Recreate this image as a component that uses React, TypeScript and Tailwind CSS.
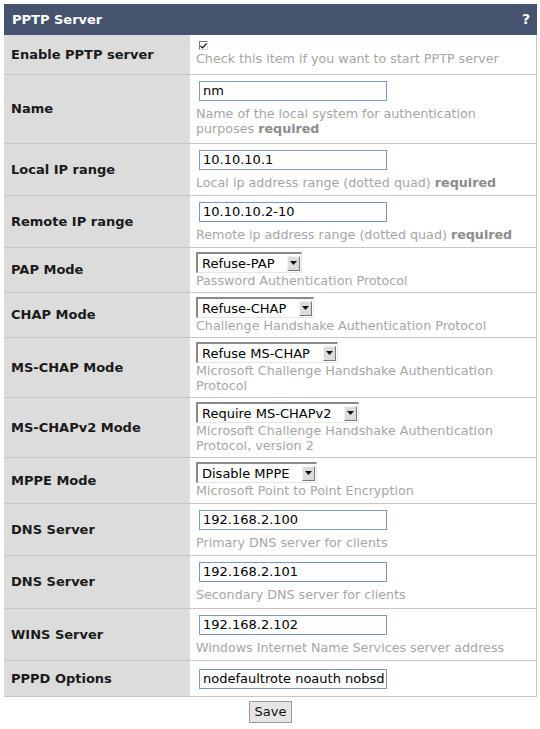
import React from "react";

const font = { fontFamily: "'DejaVu Sans', Verdana, sans-serif" };

function Hint({ children }: { children: React.ReactNode }) {
  return <div className="text-[12.7px] leading-[15px] text-[#a6a6a6]">{children}</div>;
}

function Req() {
  return <b className="font-bold text-[#8c8c8c]">required</b>;
}

function TextInput({ value }: { value: string }) {
  return (
    <div className="ml-[3px] flex h-[20px] w-[188px] items-center overflow-hidden border border-[#7d9ac6] bg-white pl-[3px] text-[13px] text-black">
      <span className="whitespace-nowrap">{value}</span>
    </div>
  );
}

function Select({ value }: { value: string }) {
  return (
    <div className="flex h-[21px] w-fit items-center border-t-2 border-l-2 border-b border-r border-t-[#8a8a8a] border-l-[#8a8a8a] border-b-[#e6e6e6] border-r-[#e6e6e6] bg-white">
      <span className="whitespace-nowrap pl-[4px] pr-[13px] text-[13px] leading-[15px] text-black">{value}</span>
      <div className="mr-[1px] flex h-[15px] w-[13px] items-center justify-center border border-t-[#f4f4f4] border-l-[#f4f4f4] border-b-[#777] border-r-[#777] bg-[#dcdcdc]">
        <svg width="7" height="4" viewBox="0 0 7 4">
          <path d="M0 0h7L3.5 4z" fill="#111" />
        </svg>
      </div>
    </div>
  );
}

function Row({
  label,
  children,
  className,
}: {
  label: string;
  children: React.ReactNode;
  className: string;
}) {
  return (
    <div className="flex border-b border-[#c6c6c6]">
      <div className="flex w-[186px] shrink-0 items-center bg-[#dcdcdc] pl-[7px] text-[13px] font-bold text-[#1a1a1a]">
        {label}
      </div>
      <div className={"flex-1 pl-[6px] " + className}>{children}</div>
    </div>
  );
}

function InputRow({
  label,
  value,
  hint,
  pad = "pt-[6px] pb-[5px]",
}: {
  label: string;
  value: string;
  hint: React.ReactNode;
  pad?: string;
}) {
  return (
    <Row label={label} className={pad}>
      <TextInput value={value} />
      <div className="mt-[5px]">
        <Hint>{hint}</Hint>
      </div>
    </Row>
  );
}

function SelectRow({
  label,
  value,
  hint,
  pad = "pt-[4px] pb-[4px]",
}: {
  label: string;
  value: string;
  hint: React.ReactNode;
  pad?: string;
}) {
  return (
    <Row label={label} className={pad}>
      <Select value={value} />
      <Hint>{hint}</Hint>
    </Row>
  );
}

export default function App() {
  return (
    <div className="h-[729px] w-[540px] bg-white pt-[4px]" style={font}>
      <div className="mx-[4px] w-[533px]">
        <div className="flex h-[31px] items-center justify-between bg-[#45536f] pl-[8px] pr-[7px] text-[13px] font-bold text-white">
          <span>PPTP Server</span>
          <span className="text-[14px]">?</span>
        </div>
        <div className="border-r border-[#c6c6c6]">
          <Row label="Enable PPTP server" className="pt-[5px] pb-[8px]">
            <div className="h-[11px] pl-[3px] pt-[1px]">
              <div className="flex h-[9px] w-[9px] items-center justify-center border-t border-l border-b border-r border-t-[#777] border-l-[#777] border-b-[#ddd] border-r-[#ddd] bg-white">
                <svg width="7" height="6" viewBox="0 0 7 6">
                  <path d="M0.5 3l2 2 4-4.5" stroke="#111" strokeWidth="1.2" fill="none" />
                </svg>
              </div>
            </div>
            <Hint>Check this item if you want to start PPTP server</Hint>
          </Row>
          <Row label="Name" className="pt-[6px] pb-[7px]">
            <TextInput value="nm" />
            <div className="mt-[5px]">
              <Hint>
                Name of the local system for authentication purposes <Req />
              </Hint>
            </div>
          </Row>
          <InputRow
            label="Local IP range"
            value="10.10.10.1"
            hint={
              <>
                Local ip address range (dotted quad) <Req />
              </>
            }
          />
          <InputRow
            label="Remote IP range"
            value="10.10.10.2-10"
            hint={
              <>
                Remote ip address range (dotted quad) <Req />
              </>
            }
          />
          <SelectRow label="PAP Mode" value="Refuse-PAP" hint="Password Authentication Protocol" />
          <SelectRow label="CHAP Mode" value="Refuse-CHAP" hint="Challenge Handshake Authentication Protocol" />
          <SelectRow
            label="MS-CHAP Mode"
            value="Refuse MS-CHAP"
            hint="Microsoft Challenge Handshake Authentication Protocol"
          />
          <SelectRow
            label="MS-CHAPv2 Mode"
            value="Require MS-CHAPv2"
            hint="Microsoft Challenge Handshake Authentication Protocol, version 2"
          />
          <SelectRow
            label="MPPE Mode"
            value="Disable MPPE"
            hint="Microsoft Point to Point Encryption"
            pad="pt-[4px] pb-[5px]"
          />
          <InputRow label="DNS Server" value="192.168.2.100" hint="Primary DNS server for clients" />
          <InputRow
            label="DNS Server"
            value="192.168.2.101"
            hint="Secondary DNS server for clients"
            pad="pt-[6px] pb-[6px]"
          />
          <InputRow
            label="WINS Server"
            value="192.168.2.102"
            hint="Windows Internet Name Services server address"
          />
          <Row label="PPPD Options" className="pt-[8px] pb-[7px]">
            <TextInput value="nodefaultrote noauth nobsd" />
          </Row>
        </div>
        <div className="mt-[4px] flex justify-center">
          <button className="h-[22px] w-[43px] border border-[#9a9a9a] bg-[#e6e6e6] text-[13px] text-[#111]">
            Save
          </button>
        </div>
      </div>
    </div>
  );
}
